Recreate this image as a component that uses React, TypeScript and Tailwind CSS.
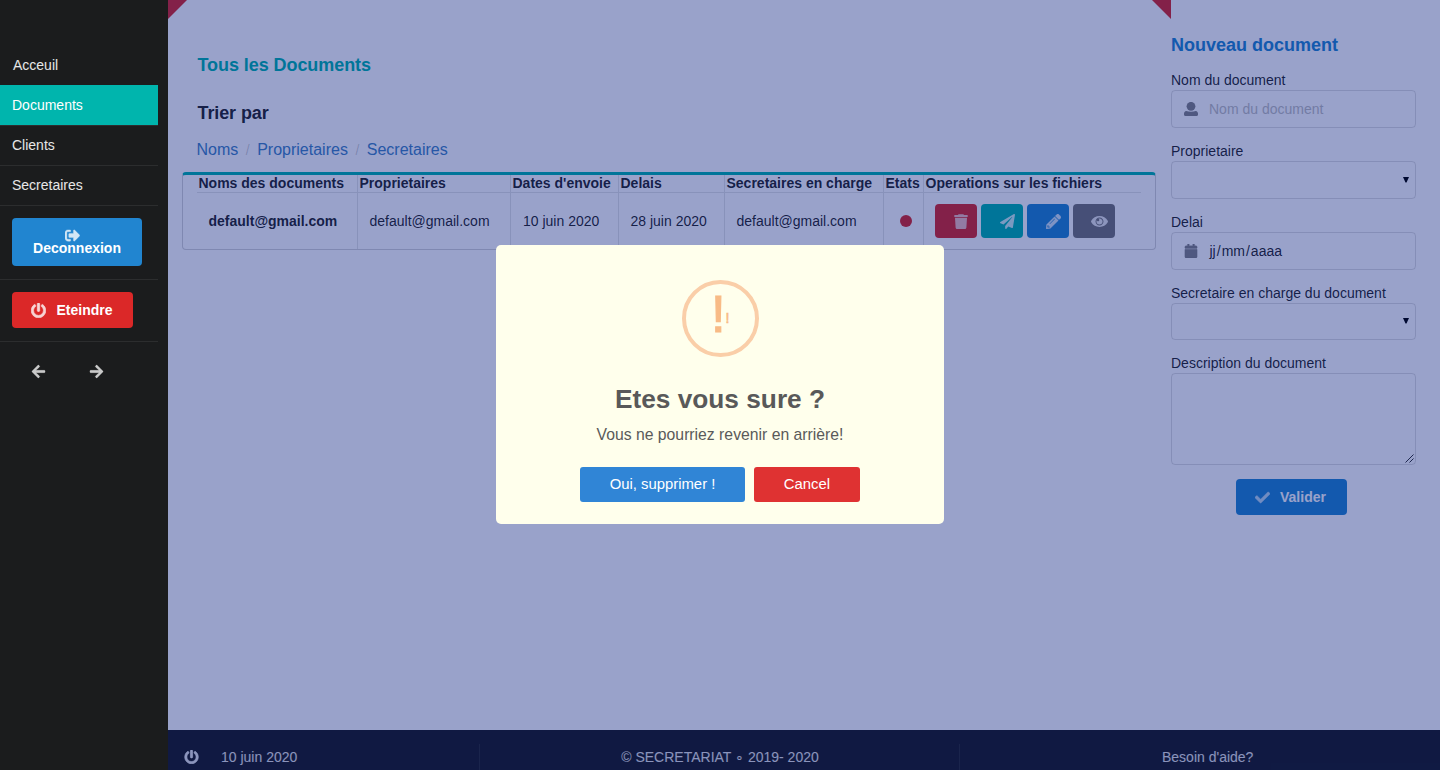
import React from "react";
import {
  FaArrowLeft,
  FaArrowRight,
  FaCalendar,
  FaCheck,
  FaPaperPlane,
  FaPencilAlt,
  FaPowerOff,
  FaSignOutAlt,
} from "react-icons/fa";

function UserIcon({ className }: { className?: string }) {
  return (
    <svg viewBox="0 0 14 14" fill="currentColor" className={className}>
      <circle cx="7" cy="4.3" r="4.4" />
      <path d="M2.2 9C5 10 9 10 11.8 9C13.2 9.3 14 10.4 14 11.6V12.8C14 13.5 13.5 14 12.8 14H1.2C0.5 14 0 13.5 0 12.8V11.6C0 10.4 0.8 9.3 2.2 9Z" />
    </svg>
  );
}

function EyeIcon({ className }: { className?: string }) {
  return (
    <svg viewBox="0 0 576 512" fill="currentColor" className={className}>
      <path d="M569.354 231.631C512.97 135.949 407.81 72 288 72 168.14 72 63.004 135.994 6.646 231.631a47.999 47.999 0 0 0 0 48.739C63.031 376.051 168.19 440 288 440c119.86 0 224.996-63.994 281.354-159.631a47.997 47.997 0 0 0 0-48.738zM288 392c-75.162 0-136-60.827-136-136 0-75.162 60.826-136 136-136 75.162 0 136 60.826 136 136 0 75.162-60.826 136-136 136zm104-136c0 57.438-46.562 104-104 104s-104-46.562-104-104c0-17.708 4.431-34.379 12.236-48.973l-.001.032c0 23.651 19.173 42.823 42.824 42.823s42.824-19.173 42.824-42.823c0-23.651-19.173-42.824-42.824-42.824l-.032.001C253.621 156.431 270.292 152 288 152c57.438 0 104 46.562 104 104z" />
    </svg>
  );
}

function TrashIcon({ className }: { className?: string }) {
  return (
    <svg viewBox="0 0 14 15" fill="currentColor" className={className}>
      <path d="M0.3 1.4C0.3 1.1 0.5 1 0.8 1H4L4.6 0.2H9.4L10 1H13.2C13.5 1 13.7 1.1 13.7 1.4V2.9H0.3ZM1 3.7H13L12.4 13.5C12.3 14.4 11.8 15 11 15H3C2.2 15 1.7 14.4 1.6 13.5Z" />
    </svg>
  );
}

function Sidebar() {
  return (
    <aside className="relative z-20 w-[168px] shrink-0 bg-[#1b1c1d] pt-[45px] text-white/90">
      <nav className="w-[158px]">
        <a className="flex h-10 items-center pl-[13px]">Acceuil</a>
        <a className="flex h-10 items-center bg-[#00b5ad] pl-3 text-white">Documents</a>
        <a className="flex h-[41px] items-center border-y border-white/8 pb-px pl-3">Clients</a>
        <a className="flex h-10 items-center border-b border-white/8 pb-px pl-3">Secretaires</a>
        <div className="flex h-[74px] items-start border-b border-white/8 pt-3 pl-3">
          <button className="flex h-12 w-[130px] flex-col items-center rounded bg-[#2185d0] pt-[10px] font-bold leading-[14px] text-white">
            <FaSignOutAlt className="mr-[10px] size-[15px] shrink-0 stroke-current stroke-[12] opacity-80" />
            <span className="-mt-[2px]">Deconnexion</span>
          </button>
        </div>
        <div className="flex h-[62px] items-start border-b border-white/8 pt-3 pl-3">
          <button className="flex h-9 w-[121px] items-center rounded bg-[#db2828] pl-[19px] font-bold text-white">
            <FaPowerOff className="mr-[10.5px] size-[15px] stroke-current stroke-[24] opacity-80" />
            Eteindre
          </button>
        </div>
        <div className="flex pt-[22px] pl-[31px]">
          <FaArrowLeft className="mr-[43px] size-[15px] stroke-current stroke-[10] opacity-85" />
          <FaArrowRight className="size-[15px] stroke-current stroke-[10] opacity-85" />
        </div>
      </nav>
    </aside>
  );
}

const headings = [
  "Noms des documents",
  "Proprietaires",
  "Dates d'envoie",
  "Delais",
  "Secretaires en charge",
  "Etats",
  "Operations sur les fichiers",
];

function DocumentsTable() {
  return (
    <div className="ml-[14px] h-[78px] w-[974px] overflow-hidden rounded border border-t-[3px] border-[#d4d4d5] border-t-[#00b5ad] px-[14px]">
      <div className="grid h-full grid-cols-[161px_153px_108px_106px_159px_40px_217px] grid-rows-[18px_1fr]">
        {headings.map((h, i) => (
          <div
            key={h}
            className={
              "flex items-center border-b border-[#22242620] pb-px pl-[1.5px] font-bold leading-4 whitespace-nowrap " +
              (i < 6 ? "border-r" : "")
            }
          >
            {h}
          </div>
        ))}
        <div className="flex items-center border-r border-[#22242620] pl-[11.5px] font-bold">default@gmail.com</div>
        <div className="flex items-center border-r border-[#22242620] pl-[11.5px]">default@gmail.com</div>
        <div className="flex items-center border-r border-[#22242620] pl-3">10 juin 2020</div>
        <div className="flex items-center border-r border-[#22242620] pl-[11.5px]">28 juin 2020</div>
        <div className="flex items-center border-r border-[#22242620] pl-[11.5px]">default@gmail.com</div>
        <div className="flex items-center border-r border-[#22242620] pl-4">
          <span className="size-3 rounded-full bg-[#db2828]" />
        </div>
        <div className="flex items-center gap-1 pl-[11px] text-white">
          <button className="flex h-[34px] w-[42px] items-center rounded bg-[#db2828] pt-px pl-[19px]">
            <TrashIcon className="h-[15px] w-[14px] opacity-70" />
          </button>
          <button className="flex h-[34px] w-[42px] items-center rounded bg-[#00b5ad] pt-px pl-[19px]">
            <FaPaperPlane className="size-[15px] opacity-80" />
          </button>
          <button className="flex h-[34px] w-[42px] items-center rounded bg-[#2185d0] pt-px pl-[19px]">
            <FaPencilAlt className="size-[15px] stroke-current stroke-[12] opacity-80" />
          </button>
          <button className="flex h-[34px] w-[42px] items-center rounded bg-[#767676] pt-px pl-[18px]">
            <EyeIcon className="h-[15px] w-[17px] opacity-85" />
          </button>
        </div>
      </div>
    </div>
  );
}

function Documents() {
  return (
    <main className="relative w-[1003px] shrink-0 pt-[53px]">
      <svg className="absolute top-0 left-0" width="19" height="19">
        <path d="M0 0H19L0 19Z" fill="#db2828" />
      </svg>
      <svg className="absolute top-0 right-0" width="19" height="19">
        <path d="M0 0H19V19Z" fill="#db2828" />
      </svg>
      <h2 className="pl-[29.5px] text-[18px] font-bold leading-6 tracking-[-0.07px] text-[#00b5ad]">
        Tous les Documents
      </h2>
      <h3 className="mt-6 pl-[29.5px] text-[18px] font-bold leading-6 tracking-[-0.1px]">Trier par</h3>
      <div className="mt-[13px] mb-[10px] flex h-6 items-center pl-[28.5px] text-base leading-6 text-[#4183c4]">
        <a>Noms</a>
        <span className="mx-[7.5px] text-sm text-black/20">/</span>
        <a>Proprietaires</a>
        <span className="mx-[7.5px] text-sm text-black/20">/</span>
        <a>Secretaires</a>
      </div>
      <DocumentsTable />
    </main>
  );
}

const fieldBox = "flex items-center rounded border border-[#22242626]";

function Caret() {
  return (
    <svg className="mr-[6px] mb-px ml-auto" width="6" height="6" viewBox="0 0 6 6">
      <path d="M0 0H6L3.5 5.5H2.5Z" fill="#000" />
    </svg>
  );
}

function NewDocument() {
  return (
    <form className="w-[245px] pt-[33px]">
      <h2 className="mb-[13px] text-[18px] font-bold leading-6 text-[#2185d0]">Nouveau document</h2>
      <div className="mb-[13px]">
        <div className="h-5 leading-5">Nom du document</div>
        <div className={fieldBox + " h-[38px] pl-[11.5px]"}>
          <UserIcon className="mr-[11.5px] size-[14px] opacity-55" />
          <span className="text-[#bfbfbf]">Nom du document</span>
        </div>
      </div>
      <div className="mb-[13px]">
        <div className="h-5 leading-5">Proprietaire</div>
        <div className={fieldBox + " h-[38px]"}>
          <Caret />
        </div>
      </div>
      <div className="mb-[13px]">
        <div className="h-5 leading-5">Delai</div>
        <div className={fieldBox + " h-[38px] pl-[11.5px]"}>
          <FaCalendar className="mr-[12px] size-[14px] stroke-current stroke-[12] opacity-55" />
          <span>
            jj<span className="mx-[1px]">/</span>mm<span className="mx-[1px]">/</span>aaaa
          </span>
        </div>
      </div>
      <div className="mb-[13px]">
        <div className="h-5 leading-5">Secretaire en charge du document</div>
        <div className={fieldBox + " h-[37px]"}>
          <Caret />
        </div>
      </div>
      <div className="h-5 leading-5">Description du document</div>
      <div className={fieldBox + " h-[92px] items-end justify-end"}>
        <svg className="m-px" width="9" height="9" viewBox="0 0 9 9">
          <path d="M0.5 8.5L8.5 0.5M4.5 8.5L8.5 4.5" stroke="#333" fill="none" />
        </svg>
      </div>
      <button
        type="button"
        className="mt-[14px] ml-[65px] flex h-9 w-[111px] items-center rounded bg-[#2185d0] pl-[19px] font-bold text-white"
      >
        <FaCheck className="mr-[10px] size-[15px] stroke-current stroke-[16] opacity-70" />
        Valider
      </button>
    </form>
  );
}

function Footer() {
  return (
    <footer className="flex h-10 shrink-0 bg-[#1b1c1d] pt-[14px] leading-[26px] text-white/90">
      <div className="flex w-[312px] items-center border-r border-white/8 pl-4">
        <FaPowerOff className="mr-[22px] size-[15px] stroke-current stroke-[24] pb-px" />
        10 juin 2020
      </div>
      <div className="w-[480px] border-r border-white/8 pl-px text-center">© SECRETARIAT ∘ 2019- 2020</div>
      <div className="pl-[202px]">Besoin d'aide?</div>
    </footer>
  );
}

function ConfirmDialog() {
  return (
    <div className="absolute top-[245px] left-[496px] z-30 flex h-[279px] w-[448px] flex-col items-center rounded-[5px] bg-[#ffffec] pt-[35px]">
      <div className="relative size-[77px] rounded-full border-4 border-[#facea8] text-[#f8bb86]">
        <span className="absolute top-[4px] left-[25.5px] text-[52.5px] leading-[52px] [-webkit-text-stroke:1.2px_#f8bb86]">
          !
        </span>
        <span className="absolute top-[24px] left-[40px] text-sm leading-5 [-webkit-text-stroke:0.6px_#f8bb86]">
          !
        </span>
      </div>
      <h2 className="mt-[26px] text-[26.25px] font-bold leading-8 text-[#595959]">Etes vous sure ?</h2>
      <p className="mt-[8px] text-[15.75px] leading-6 text-[#5a5a5a]">Vous ne pourriez revenir en arrière!</p>
      <div className="mt-5 flex gap-[9px] text-[14.875px] text-white">
        <button className="h-[35px] w-[165px] rounded-[3px] bg-[#3085d6]">Oui, supprimer !</button>
        <button className="h-[35px] w-[106px] rounded-[3px] bg-[#df3232]">Cancel</button>
      </div>
    </div>
  );
}

export default function App() {
  return (
    <div className="relative flex h-[770px] w-[1440px] overflow-hidden bg-white font-['Liberation_Sans',Arial,sans-serif] text-sm text-black/87">
      <Sidebar />
      <div className="flex min-w-0 flex-1 flex-col">
        <div className="flex flex-1">
          <Documents />
          <NewDocument />
        </div>
        <Footer />
      </div>
      <div className="absolute inset-0 z-10 bg-[rgba(0,22,123,0.4)]" />
      <ConfirmDialog />
    </div>
  );
}
